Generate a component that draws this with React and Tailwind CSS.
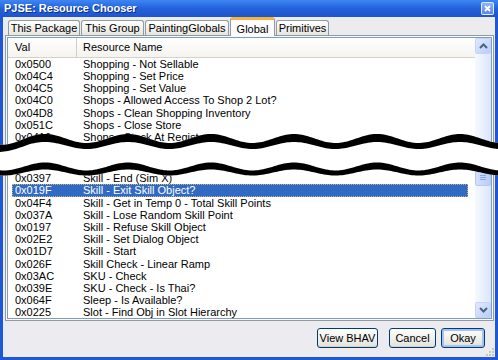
import React from "react";

const topRows = [
  ["0x0500", "Shopping - Not Sellable"],
  ["0x04C4", "Shopping - Set Price"],
  ["0x04C5", "Shopping - Set Value"],
  ["0x04C0", "Shops - Allowed Access To Shop 2 Lot?"],
  ["0x04D8", "Shops - Clean Shopping Inventory"],
  ["0x051C", "Shops - Close Store"],
  ["0x0416", "Shops - Stock At Register"],
];

const bottomRows = [
  ["0x0397", "Skill - End (Sim X)"],
  ["0x019F", "Skill - Exit Skill Object?", true],
  ["0x04F4", "Skill - Get in Temp 0 - Total Skill Points"],
  ["0x037A", "Skill - Lose Random Skill Point"],
  ["0x0197", "Skill - Refuse Skill Object"],
  ["0x02E2", "Skill - Set Dialog Object"],
  ["0x01D7", "Skill - Start"],
  ["0x026F", "Skill Check - Linear Ramp"],
  ["0x03AC", "SKU - Check"],
  ["0x039E", "SKU - Check - Is Thai?"],
  ["0x064F", "Sleep - Is Available?"],
  ["0x0225", "Slot - Find Obj in Slot Hierarchy"],
];

function Row({ val, name, selected }) {
  return (
    <div
      className={
        "h-[12.2px] leading-[12.2px] flex whitespace-nowrap pl-[3px] " +
        (selected
          ? "bg-[#316ac5] text-white outline outline-1 outline-dotted outline-[#c9b26a] -outline-offset-1"
          : "text-black")
      }
    >
      <div className="w-[68px]">{val}</div>
      <div>{name}</div>
    </div>
  );
}

function Tab({ children, w, selected }) {
  if (selected) {
    return (
      <div
        className={`${w} h-[19px] -mb-[1px] relative z-10 bg-[#fcfcfe] border-x border-[#919b9c] border-t-[3px] border-t-[#f5b53c] rounded-t-[3px] flex items-start justify-center pt-[1px] text-black`}
      >
        {children}
      </div>
    );
  }
  return (
    <div
      className={`${w} h-[15px] border border-b-0 border-[#919b9c] rounded-t-[3px] bg-gradient-to-b from-white to-[#e6e5e0] flex items-center justify-center text-black`}
    >
      {children}
    </div>
  );
}

function Chevron({ up }) {
  return (
    <svg width="9" height="6" viewBox="0 0 9 6">
      <path
        d={up ? "M1 5 L4.5 1.5 L8 5" : "M1 1 L4.5 4.5 L8 1"}
        fill="none"
        stroke="#4d6185"
        strokeWidth="2"
      />
    </svg>
  );
}

function ScrollBtn({ up }) {
  return (
    <div className="h-[16px] w-[16px] rounded-[2px] border border-[#c3d3fd] bg-gradient-to-br from-[#e1eafe] to-[#b9cdf7] flex items-center justify-center">
      <Chevron up={up} />
    </div>
  );
}

function Wave() {
  const W = 498;
  const f = (x) => Math.cos((2 * Math.PI * (x - 45)) / 83);
  const t1 = (x) => 10.5 - 4.5 * f(x) + (x < 30 ? 2 : 0) * (1 - x / 30);
  const b1 = (x) => 17.5 - 3.5 * f(x) + (x < 30 ? 3 : 0) * (1 - x / 30);
  const t2 = (x) => 38.5 - 4 * f(x);
  const b2 = (x) => 44.5 - 3 * f(x);
  const xs = [];
  for (let x = -2; x <= W + 2; x += 2) xs.push(x);
  const band = (a, b) =>
    "M" +
    xs.map((x) => `${x} ${a(x).toFixed(2)}`).join(" L") +
    " L" +
    xs
      .slice()
      .reverse()
      .map((x) => `${x} ${b(x).toFixed(2)}`)
      .join(" L") +
    " Z";
  return (
    <svg
      className="absolute left-0 top-[128px]"
      width="498"
      height="52"
      viewBox="0 0 498 52"
    >
      <path d={band(t1, b2)} fill="#ffffff" />
      <path d={band(t1, b1)} fill="#000000" />
      <path d={band(t2, b2)} fill="#000000" />
    </svg>
  );
}

export default function App() {
  return (
    <div className="relative w-[498px] h-[360px] overflow-hidden font-['Liberation_Sans',Arial,sans-serif] text-[11px] bg-[#1f58d6]">
      <div className="h-full flex flex-col">
        {/* title bar */}
        <div className="h-[17px] shrink-0 bg-gradient-to-b from-[#3f86f2] via-[#2461da] to-[#1d55cc] flex items-center justify-between pl-[4px] pr-[4px]">
          <span className="text-white font-bold text-[11px] leading-none [text-shadow:1px_1px_0_#0b2f8a]">
            PJSE: Resource Chooser
          </span>
          <div className="w-[13px] h-[13px] rounded-[2px] border border-white/80 bg-gradient-to-b from-[#8fb2f6] to-[#5a86e6] flex items-center justify-center">
            <svg width="7" height="7" viewBox="0 0 7 7">
              <path d="M1 1 L6 6 M6 1 L1 6" stroke="white" strokeWidth="1.8" />
            </svg>
          </div>
        </div>
        {/* body */}
        <div className="flex-1 ml-[3px] mr-[3px] mb-[3px] bg-[#ecebef] flex flex-col">
          {/* tabs */}
          <div className="h-[18px] shrink-0 flex items-end pl-[5px] gap-[1px]">
            <Tab w="w-[72px]">This Package</Tab>
            <Tab w="w-[63px]">This Group</Tab>
            <Tab w="w-[84px]">PaintingGlobals</Tab>
            <Tab w="w-[45px]" selected>
              Global
            </Tab>
            <Tab w="w-[53px]">Primitives</Tab>
          </div>
          {/* panel */}
          <div className="h-[286px] shrink-0 ml-[2px] mr-[1px] border border-[#919b9c] bg-[#fafafa] p-[1px]">
            <div className="h-full border border-[#7f9db9] bg-white flex">
              <div className="flex-1 overflow-hidden">
                {/* header */}
                <div className="h-[19.9px] flex items-center border-b border-[#d5d2ca] bg-gradient-to-b from-white to-[#f4f3ee] text-black">
                  <div className="w-[69px] pl-[7px] h-full flex items-center border-r border-[#d0cec6]">
                    Val
                  </div>
                  <div className="pl-[6px]">Resource Name</div>
                </div>
                <div className="ml-[4px] w-[456px]">
                  {topRows.map((r) => (
                    <Row key={r[0]} val={r[0]} name={r[1]} />
                  ))}
                  <div className="h-[29px]" />
                  {bottomRows.map((r) => (
                    <Row key={r[0]} val={r[0]} name={r[1]} selected={r[2]} />
                  ))}
                </div>
              </div>
              {/* scrollbar */}
              <div className="w-[16px] flex flex-col bg-gradient-to-r from-[#f7f9fe] to-[#dbe6fb]">
                <ScrollBtn up />
                <div className="flex-1">
                  <div className="mt-[114px] h-[18px] w-[16px] rounded-[2px] border border-[#b4c8f6] bg-gradient-to-r from-[#d3e0fd] to-[#b8cdf7] flex flex-col items-center justify-center gap-[1px]">
                    <div className="w-[6px] h-[1px] bg-[#8aa6e6]" />
                    <div className="w-[6px] h-[1px] bg-[#8aa6e6]" />
                    <div className="w-[6px] h-[1px] bg-[#8aa6e6]" />
                  </div>
                </div>
                <ScrollBtn />
              </div>
            </div>
          </div>
          {/* buttons */}
          <div className="flex-1 flex items-start justify-end pt-[7px] pr-[10px] relative">
            <button className="w-[61px] h-[20px] rounded-[3px] border border-[#003c74] bg-gradient-to-b from-white to-[#e2e1da] text-black text-[11px] shadow-[inset_0_-1px_0_#d6d0c5]">
              View BHAV
            </button>
            <button className="ml-[11px] w-[47px] h-[20px] rounded-[3px] border border-[#003c74] bg-gradient-to-b from-white to-[#e2e1da] text-black text-[11px] shadow-[inset_0_-1px_0_#d6d0c5]">
              Cancel
            </button>
            <button className="ml-[5px] w-[44px] h-[20px] rounded-[3px] border border-[#003c74] bg-gradient-to-b from-white to-[#e2e1da] text-black text-[11px] shadow-[inset_0_0_0_2px_#a5c2f2]">
              Okay
            </button>
            <div className="absolute right-[1px] bottom-[1px] grid grid-cols-3 gap-[1px]">
              <div className="w-[2px] h-[2px]" />
              <div className="w-[2px] h-[2px]" />
              <div className="w-[2px] h-[2px] bg-[#c7c5bc]" />
              <div className="w-[2px] h-[2px]" />
              <div className="w-[2px] h-[2px] bg-[#c7c5bc]" />
              <div className="w-[2px] h-[2px] bg-[#c7c5bc]" />
              <div className="w-[2px] h-[2px] bg-[#c7c5bc]" />
              <div className="w-[2px] h-[2px] bg-[#c7c5bc]" />
              <div className="w-[2px] h-[2px] bg-[#c7c5bc]" />
            </div>
          </div>
        </div>
      </div>
      <Wave />
    </div>
  );
}
